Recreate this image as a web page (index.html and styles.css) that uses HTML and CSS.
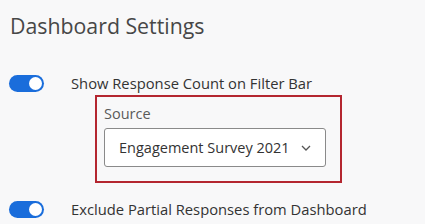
FILE: index.html
```html
<!DOCTYPE html>
<html lang="en">
<head>
  <meta charset="UTF-8">
  <title>Dashboard Settings</title>
  <link rel="stylesheet" href="styles.css">
</head>
<body>

<div class="panel">
  <h1>Dashboard Settings</h1>

  <div class="ajuste">
    <span class="switch"><span class="knob"></span></span>
    <span class="etiqueta">Show Response Count on Filter Bar</span>
  </div>

  <div class="fuente">
    <div class="fuente-label">Source</div>
    <div class="select">
      <span class="valor">Engagement Survey 2021</span>
      <svg class="chevron" width="10" height="6" viewBox="0 0 10 6">
        <path d="M1 1 L5 5 L9 1" fill="none" stroke="#555" stroke-width="1.3"/>
      </svg>
    </div>
  </div>

  <div class="ajuste ultimo">
    <span class="switch"><span class="knob"></span></span>
    <span class="etiqueta">Exclude Partial Responses from Dashboard</span>
  </div>
</div>

</body>
</html>
```

FILE: styles.css
```css
body {
  margin: 0;
  background: #f8f8f9;
  font-family: 'Open Sans', sans-serif;
  color: #333;
  overflow: hidden;
}

.panel {
  padding: 10px 0 0 9px;
}

h1 {
  margin: 0 0 0 1px;
  font-weight: 400;
  font-size: 21.3px;
  line-height: 32px;
  color: #474747;
}

.ajuste {
  display: flex;
  align-items: center;
  margin-top: 32px;
  height: 18px;
}

.ajuste.ultimo {
  margin-top: 17px;
}

.switch {
  width: 35px;
  height: 17px;
  border-radius: 9px;
  background: #1a6ddb;
  display: flex;
  align-items: center;
  justify-content: flex-end;
  padding: 0 2px;
  box-sizing: border-box;
}

.knob {
  width: 13px;
  height: 13px;
  border-radius: 50%;
  background: white;
}

.etiqueta {
  margin-left: 27px;
  font-size: 14.75px;
  color: #333;
  white-space: nowrap;
}

.fuente {
  margin: 3px 0 0 86px;
  width: 247px;
  height: 88px;
  box-sizing: border-box;
  border: 2px solid #b42630;
  padding: 7px 14px 0 7px;
}

.fuente-label {
  font-size: 14.5px;
  color: #5a5a5a;
  line-height: 20px;
}

.select {
  margin-top: 4px;
  height: 39px;
  box-sizing: border-box;
  border: 1px solid #8a8a8a;
  border-radius: 3px;
  background: white;
  display: flex;
  align-items: center;
  padding: 0 14px 0 14px;
  justify-content: space-between;
  color: #333;
}

.valor {
  font-size: 14.5px;
  white-space: nowrap;
}
```
